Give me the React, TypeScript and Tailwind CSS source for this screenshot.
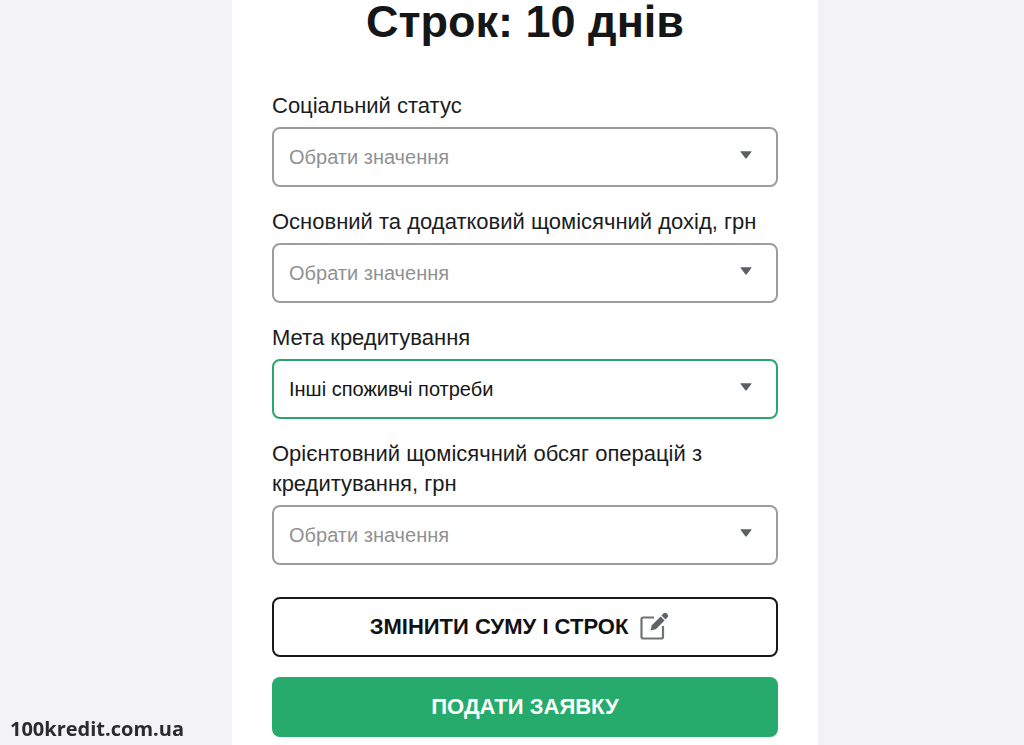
import { useId, useState } from "react";

type FieldProps = {
  label: string;
  options: string[];
  initial?: string;
};

function SelectField({ label, options, initial = "" }: FieldProps) {
  const id = useId();
  const [value, setValue] = useState(initial);
  const tone = value
    ? "border-[#2ba76d] text-[#151617]"
    : "border-[#9b9d9f] text-[#909192]";

  return (
    <div className="flex flex-col gap-1.5">
      <label htmlFor={id} className="text-[22px] leading-[30px] text-[#1b1c1e]">
        {label}
      </label>
      <div className="grid items-center">
        <select
          id={id}
          value={value}
          onChange={(event) => setValue(event.target.value)}
          className={`col-start-1 row-start-1 h-15 w-full appearance-none rounded-lg border-2 bg-white pr-12 pl-[15px] text-[20px] ${tone}`}
        >
          <option value="" disabled>
            Обрати значення
          </option>
          {options.map((option) => (
            <option key={option} value={option}>
              {option}
            </option>
          ))}
        </select>
        <svg
          viewBox="0 0 12 8"
          aria-hidden="true"
          className="pointer-events-none col-start-1 row-start-1 mr-[26px] mb-1 h-2 w-3 justify-self-end fill-[#5c6064]"
        >
          <path d="M1 .2h10q.9 0 .4.7L6.7 7.300q-.7.7-1.400 0L.6.9Q.1.2 1 .2z" />
        </svg>
      </div>
    </div>
  );
}

function EditIcon() {
  return (
    <svg viewBox="0 0 28 28" aria-hidden="true" className="mr-3 size-7 shrink-0">
      <path
        d="M14 5.500H3.200Q1.500 5.500 1.500 7.200v17.600q0 1.700 1.700 1.700h18.100q1.700 0 1.700-1.700V14"
        fill="none"
        stroke="#707376"
        strokeWidth="2.2"
      />
      <path d="M10.500 18.500l1.300-5.300L20.600 4.500l4 4-8.800 8.700z" fill="#606468" />
      <path d="M21.500 3.600l1.600-1.800a2.800 2.800 0 0 1 4 4L25.500 7.600z" fill="#606468" />
    </svg>
  );
}

export default function App() {
  return (
    <div className="min-h-screen bg-[#f3f3f5] pl-[26px] font-['Liberation_Sans',Arial,sans-serif]">
      <main className="mx-auto min-h-screen max-w-[586px] bg-white px-10 pb-2">
        <h1 className="text-center text-[45px] leading-11 font-bold text-[#151617]">
          Строк: 10 днів
        </h1>
        <form className="pt-[47px]" onSubmit={(event) => event.preventDefault()}>
          <div className="flex flex-col gap-5">
            <SelectField label="Соціальний статус" options={["Працюю", "Студент", "Пенсіонер"]} />
            <SelectField
              label="Основний та додатковий щомісячний дохід, грн"
              options={["до 10 000", "10 000 – 20 000", "понад 20 000"]}
            />
            <SelectField
              label="Мета кредитування"
              options={["Інші споживчі потреби"]}
              initial="Інші споживчі потреби"
            />
            <SelectField
              label="Орієнтовний щомісячний обсяг операцій з кредитування, грн"
              options={["до 10 000", "10 000 – 20 000", "понад 20 000"]}
            />
          </div>
          <div className="mt-8 flex flex-col gap-5">
            <button
              type="button"
              className="flex h-15 w-full items-center justify-center gap-3 rounded-lg border-2 border-[#18191a] bg-white pb-0.5 text-[22px] font-bold text-[#111213]"
            >
              ЗМІНИТИ СУМУ І СТРОК
              <EditIcon />
            </button>
            <button
              type="submit"
              className="h-15 w-full rounded-lg bg-[#27ab6c] pb-0.5 text-[22px] font-bold text-white"
            >
              ПОДАТИ ЗАЯВКУ
            </button>
          </div>
        </form>
      </main>
      <p className="fixed bottom-0.5 left-2.5 font-['Open_Sans','Noto_Sans',sans-serif] text-[20px] leading-7 font-bold text-[#2b2b2d]">
        100kredit.com.ua
      </p>
    </div>
  );
}
